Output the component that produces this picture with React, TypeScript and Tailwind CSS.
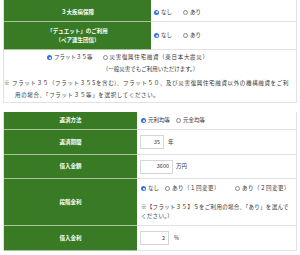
import React from "react";

const G = "bg-[#387b24]";

function Radio({ on }: { on?: boolean }) {
  return on ? (
    <span className="inline-flex w-[5px] h-[5px] rounded-full bg-[#2f74e6] items-center justify-center shrink-0">
      <span className="w-[2px] h-[2px] rounded-full bg-white" />
    </span>
  ) : (
    <span className="inline-block w-[5px] h-[5px] rounded-full border-[0.7px] border-[#888] bg-white shrink-0" />
  );
}

function Opt({ on, label, className = "" }: { on?: boolean; label: string; className?: string }) {
  return (
    <span className={`inline-flex items-center gap-[2px] ${className}`}>
      <Radio on={on} />
      <span>{label}</span>
    </span>
  );
}

function Row({ left, children, h, w, green2 }: { left: React.ReactNode; children: React.ReactNode; h: string; w: string; green2?: boolean }) {
  return (
    <div className={`flex ${h}`}>
      <div className={`${w} shrink-0 ${G} border-b border-[#a9c49d] flex items-center justify-center text-white font-bold text-center leading-[9px]`}>
        {left}
      </div>
      <div className={`flex-1 border-b border-r border-[#e2e2e2] flex items-center ${green2 ? "pl-[4px]" : "pl-[3px]"}`}>{children}</div>
    </div>
  );
}

function Input({ value, w }: { value: string; w: string }) {
  return (
    <span className={`inline-flex ${w} h-[14px] border border-[#d6d6d6] items-center justify-end pr-[3px] bg-white`}>{value}</span>
  );
}

export default function App() {
  return (
    <div className="w-[300px] h-[255px] overflow-hidden bg-white px-[3px] text-[5.5px] text-[#333] font-['Noto_Sans_CJK_JP',sans-serif]">
      {/* top table */}
      <div className="border-l border-[#e2e2e2]">
        <Row left={<span className="pt-[3px]">３大疾病保障</span>} h="h-[22px]" w="w-[147px]">
          <div className="flex items-center pt-[3px]">
            <Opt on label="なし" />
            <Opt label="あり" className="ml-[11px]" />
          </div>
        </Row>
        <Row
          left={
            <span className="pt-[1px]">
              「デュエット」のご利用
              <br />
              （ペア連生団信）
            </span>
          }
          h="h-[28px]"
          w="w-[147px]"
        >
          <div className="flex items-center">
            <Opt on label="なし" />
            <Opt label="あり" className="ml-[11px]" />
          </div>
        </Row>
        <div className="h-[53px] border-b border-r border-[#e2e2e2] pt-[4px]">
          <div className="flex items-center pl-[43px] h-[7px] gap-[10px]">
            <Opt on label="フラット３５等" />
            <span className="tracking-[0.7px]">
              <Opt label="災害復興住宅融資（東日本大震災）" />
            </span>
          </div>
          <div className="text-center mt-[4px] h-[8px] pl-[1px]">（一般災害でもご利用いただけます。）</div>
          <div className="mt-[4px] whitespace-nowrap leading-[12px] tracking-[0.65px] pl-[0px]">
            ※ フラット３５（フラット３５Sを含む)、フラット５０、及び災害復興住宅融資以外の機構融資をご利
            <br />
            <span className="pl-[11px]">用の場合、「フラット３５等」を選択してください。</span>
          </div>
        </div>
      </div>

      <div className="h-[9px]" />

      {/* bottom table */}
      <div className="border-l border-[#e2e2e2]">
        <Row left="返済方法" h="h-[18px]" w="w-[133px]" green2>
          <div className="flex items-center">
            <Opt on label="元利均等" />
            <Opt label="元金均等" className="ml-[6px]" />
          </div>
        </Row>
        <Row left="返済期間" h="h-[25px]" w="w-[133px]">
          <div className="flex items-center gap-[4px]">
            <Input value="35" w="w-[24px]" />
            <span>年</span>
          </div>
        </Row>
        <Row left="借入金額" h="h-[24px]" w="w-[133px]">
          <div className="flex items-center gap-[3px]">
            <Input value="3600" w="w-[33px]" />
            <span>万円</span>
          </div>
        </Row>
        <Row left="段階金利" h="h-[47px]" w="w-[133px]" green2>
          <div className="flex flex-col">
            <div className="flex items-center pt-[1px]">
              <Opt on label="なし" />
              <span className="tracking-[0.5px] ml-[6px]">
                <Opt label="あり（１回変更）" />
              </span>
              <span className="tracking-[0.5px] ml-[15px]">
                <Opt label="あり（２回変更）" />
              </span>
            </div>
            <div className="mt-[10px] whitespace-nowrap leading-[9px] tracking-[0.3px]">
              ※【フラット３５】Ｓをご利用の場合、「あり」を選んで
              <br />
              ください。）
            </div>
          </div>
        </Row>
        <Row left="借入金利" h="h-[25px]" w="w-[133px]">
          <div className="flex items-center gap-[5px]">
            <Input value="2" w="w-[29px]" />
            <span>%</span>
          </div>
        </Row>
      </div>
    </div>
  );
}
